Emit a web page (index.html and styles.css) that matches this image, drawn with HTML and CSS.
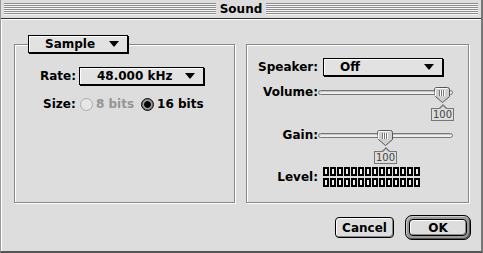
FILE: index.html
```html
<!DOCTYPE html>
<html>
<head>
    <meta charset="UTF-8" />
    <title>Sound</title>
    <link rel="stylesheet" href="styles.css">
</head>
<body>

<div class="window">
  <header class="titlebar">
    <span class="stripes"></span>
    <span class="title">Sound</span>
    <span class="stripes"></span>
  </header>

  <section class="content">
    <div class="groups">

      <!-- Sample group -->
      <div class="group group-left">
        <div class="popup popup-title"><span>Sample</span><i class="arrow"></i></div>

        <div class="row rate-row">
          <span class="label">Rate:</span>
          <div class="popup popup-rate"><span>48.000 kHz</span><i class="arrow"></i></div>
        </div>

        <div class="row size-row">
          <span class="label">Size:</span>
          <label class="option disabled"><i class="radio"></i>8 bits</label>
          <label class="option"><i class="radio on"></i>16 bits</label>
        </div>
      </div>

      <!-- Speaker group -->
      <div class="group group-right">
        <div class="field speaker-field">
          <span class="label">Speaker:</span>
          <div class="popup popup-speaker"><span>Off</span><i class="arrow"></i></div>
        </div>

        <div class="field slider-field">
          <span class="label">Volume:</span>
          <div class="slider">
            <div class="track"></div>
            <div class="knob" style="left: 113px">
              <svg class="thumb" width="17" height="17" viewBox="0 0 17 17">
                <path d="M0.5 2.5a2 2 0 0 1 2-2h11a2 2 0 0 1 2 2v7l-7 6l-7-6z" fill="#cfcfcf" stroke="#555"/>
                <path d="M1.5 2.5v6.5M1.5 1.5h12" stroke="#fff"/>
                <path d="M5.5 3v6M7.5 3v6M9.5 3v6" stroke="#777"/>
                <path d="M6.5 3v6M8.5 3v6M10.5 3v6" stroke="#fff"/>
              </svg>
              <div class="value">100</div>
            </div>
          </div>
        </div>

        <div class="field slider-field gain-field">
          <span class="label">Gain:</span>
          <div class="slider">
            <div class="track"></div>
            <div class="knob" style="left: 56px">
              <svg class="thumb" width="17" height="17" viewBox="0 0 17 17">
                <path d="M0.5 2.5a2 2 0 0 1 2-2h11a2 2 0 0 1 2 2v7l-7 6l-7-6z" fill="#cfcfcf" stroke="#555"/>
                <path d="M1.5 2.5v6.5M1.5 1.5h12" stroke="#fff"/>
                <path d="M5.5 3v6M7.5 3v6M9.5 3v6" stroke="#777"/>
                <path d="M6.5 3v6M8.5 3v6M10.5 3v6" stroke="#fff"/>
              </svg>
              <div class="value">100</div>
            </div>
          </div>
        </div>

        <div class="field level-field">
          <span class="label">Level:</span>
          <div class="meter" id="meter"></div>
        </div>
      </div>

    </div>

    <div class="actions">
      <button class="btn btn-cancel">Cancel</button>
      <div class="default-ring"><button class="btn">OK</button></div>
    </div>
  </section>
</div>

<script type="text/javascript">
// two rows of 14 level cells
const meter = document.getElementById("meter");
for (let i = 0; i < 28; i++) {
    meter.appendChild(document.createElement("i"));
}
</script>
</body>
</html>
```

FILE: styles.css
```css
* {
  box-sizing: border-box;
  margin: 0;
  padding: 0;
}

body {
  font-family: "DejaVu Sans", sans-serif;
  font-size: 12px;
  font-weight: bold;
  background: #ddd;
}

/* Window frame */
.window {
  width: 483px;
  height: 253px;
  display: flex;
  flex-direction: column;
  background: #ddd;
  border-left: 1px solid #999;
  border-right: 2px solid #777;
  border-bottom: 2px solid #555;
}

/* Title bar with the striped fill */
.titlebar {
  height: 19px;
  display: flex;
  align-items: flex-start;
  padding: 3px 3px 0;
  border-bottom: 1px solid #333;
}

.stripes {
  flex: 1;
  height: 12px;
  background: repeating-linear-gradient(to bottom, #8c8c8c 0 1px, #f6f6f6 1px 2px);
}

.title {
  padding: 0 4px;
  line-height: 12px;
}

/* Dialog content */
.content {
  flex: 1;
  padding: 25px 10px 0 13px;
  box-shadow: inset 1px 1px 0 #fff;
}

.groups {
  display: flex;
  gap: 11px;
}

.group {
  position: relative;
  height: 159px;
  border: 1px solid #888;
  box-shadow: 1px 1px 0 #fff, inset 1px 1px 0 #fff;
}

.group-left {
  width: 221px;
  padding: 22px 0 0 25px;
}

.group-right {
  width: 223px;
  padding-top: 13px;
}

/* Popup menus */
.popup {
  height: 18px;
  display: flex;
  align-items: center;
  justify-content: space-between;
  padding: 0 8px 0 16px;
  background: #e2e2e2;
  border: 1px solid #000;
  box-shadow: 1px 1px 0 #000, inset 1px 1px 0 #fff;
  line-height: 12px;
}

.arrow {
  width: 0;
  height: 0;
  border-left: 5px solid transparent;
  border-right: 5px solid transparent;
  border-top: 6px solid #000;
}

.popup-title {
  position: absolute;
  left: 13px;
  top: -10px;
  width: 100px;
}

.popup-rate {
  width: 125px;
  padding-left: 17px;
}

.popup-speaker {
  width: 120px;
  margin-left: 5px;
}

/* Left group rows */
.row {
  display: flex;
  align-items: center;
}

.rate-row .label {
  width: 39px;
}

.size-row {
  margin-top: 12px;
  height: 14px;
  padding-left: 3px;
}

.size-row .label {
  width: 37px;
}

.option {
  display: flex;
  align-items: center;
  margin-right: 7px;
}

.option.disabled {
  color: #959595;
}

.radio {
  width: 13px;
  height: 13px;
  margin-right: 3px;
  border-radius: 50%;
  border: 1px solid #aaa;
  background: #e6e6e6;
}

.radio.on {
  border: 1px solid #000;
  background: radial-gradient(circle, #000 0 3px, #777 3.5px, #c8c8c8 4.5px, #eee 6px);
  box-shadow: inset 0 0 0 1px #666;
}

/* Right group fields */
.field {
  display: flex;
  align-items: center;
}

.field .label {
  width: 71px;
  flex: none;
  text-align: right;
  line-height: 11px;
}

.speaker-field {
  height: 18px;
}

.slider-field {
  margin-top: 11px;
  align-items: flex-start;
}

.gain-field {
  margin-top: 9px;
}

.slider {
  position: relative;
  width: 135px;
  height: 34px;
}

.track {
  margin-top: 3px;
  height: 5px;
  border: 1px solid #777;
  border-radius: 3px;
  background: #eee;
  box-shadow: inset 1px 1px 0 #c4c4c4;
}

.knob {
  position: absolute;
  top: 0;
  width: 23px;
  display: flex;
  flex-direction: column;
  align-items: center;
}

.thumb {
  display: block;
}

.value {
  position: relative;
  margin-top: 4px;
  width: 23px;
  height: 13px;
  border: 1px solid #777;
  background: #ddd;
  color: #444;
  font-weight: normal;
  font-size: 10px;
  line-height: 11px;
  text-align: center;
}

/* little caret on top of the value box */
.value::before,
.value::after {
  content: "";
  position: absolute;
  left: 50%;
  width: 0;
  height: 0;
  margin-left: -4px;
  border-left: 4px solid transparent;
  border-right: 4px solid transparent;
}

.value::before {
  top: -5px;
  border-bottom: 4px solid #777;
}

.value::after {
  top: -3px;
  margin-left: -3px;
  border-left-width: 3px;
  border-right-width: 3px;
  border-bottom: 3px solid #ddd;
}

.level-field {
  margin-top: 3px;
}

.meter {
  margin-left: 5px;
  display: grid;
  grid-template-columns: repeat(14, 6px);
  grid-auto-rows: 9px;
  gap: 2px 1px;
}

.meter i {
  border: 2px solid #000;
  background: #f2f2f2;
}

/* Buttons */
.actions {
  display: flex;
  justify-content: flex-end;
  align-items: center;
  gap: 11px;
  height: 25px;
  margin-top: 12px;
}

.btn {
  font: inherit;
  color: #000;
  background: #ddd;
  border: 1px solid #000;
  border-radius: 4px;
  box-shadow: inset 1px 1px 0 #fff, inset -1px -1px 0 #888;
}

.btn-cancel {
  width: 59px;
  height: 21px;
}

.default-ring {
  width: 66px;
  height: 25px;
  padding: 3px;
  border: 1px solid #000;
  border-radius: 7px;
  background: #999;
  box-shadow: inset 1px 1px 0 #ccc, inset -1px -1px 0 #555;
}

.default-ring .btn {
  width: 100%;
  height: 100%;
}
```
